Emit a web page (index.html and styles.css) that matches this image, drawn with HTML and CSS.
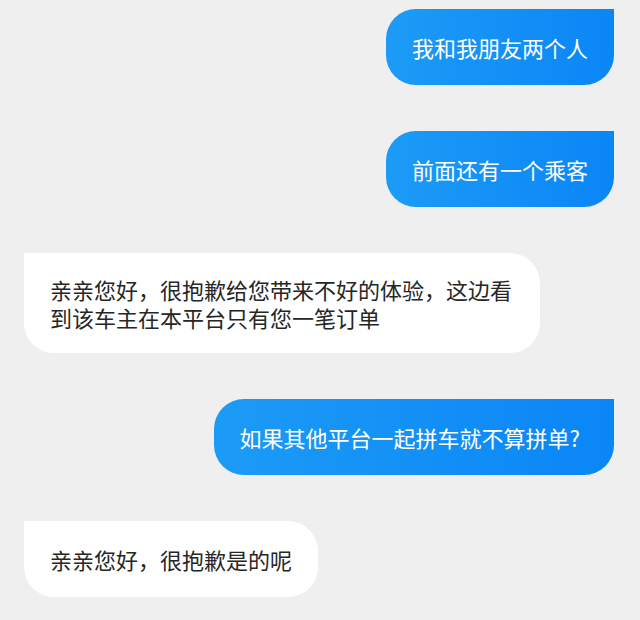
FILE: index.html
```html
<!DOCTYPE html>
<html lang="zh-CN">
<head>
    <meta charset="UTF-8">
    <meta name="viewport" content="width=device-width, initial-scale=1.0">
    <title>聊天记录</title>
    <link rel="stylesheet" href="styles.css">
</head>
<body>
    <div class="chat">
        <div class="msg msg-out">我和我朋友两个人</div>
        <div class="msg msg-out">前面还有一个乘客</div>
        <div class="msg msg-in">亲亲您好，很抱歉给您带来不好的体验，这边看到该车主在本平台只有您一笔订单</div>
        <div class="msg msg-out msg-wide">如果其他平台一起拼车就不算拼单?</div>
        <div class="msg msg-in">亲亲您好，很抱歉是的呢</div>
    </div>
</body>
</html>
```

FILE: styles.css
```css
body {
    margin: 0;
    padding: 0;
    background-color: #efefef;
    font-family: "Noto Sans CJK SC", "Noto Sans", sans-serif;
}

.chat {
    display: flex;
    flex-direction: column;
    gap: 46px;
    padding: 9px 26px 0 24px;
}

.msg {
    font-size: 22px;
    line-height: 28px;
    padding: 24px 26px;
    max-width: 464px;
}

.msg-out {
    align-self: flex-end;
    color: #fff;
    background: linear-gradient(90deg, #1c9bf6, #0a86f6);
    border-radius: 30px 0 30px 30px;
}

.msg-wide {
    padding-right: 34px;
}

.msg-in {
    align-self: flex-start;
    color: #262626;
    background-color: #fff;
    border-radius: 0 30px 30px 30px;
    padding-top: 22px;
    padding-bottom: 22px;
}

.msg-in:last-child {
    padding-top: 24px;
    padding-bottom: 24px;
}
```
